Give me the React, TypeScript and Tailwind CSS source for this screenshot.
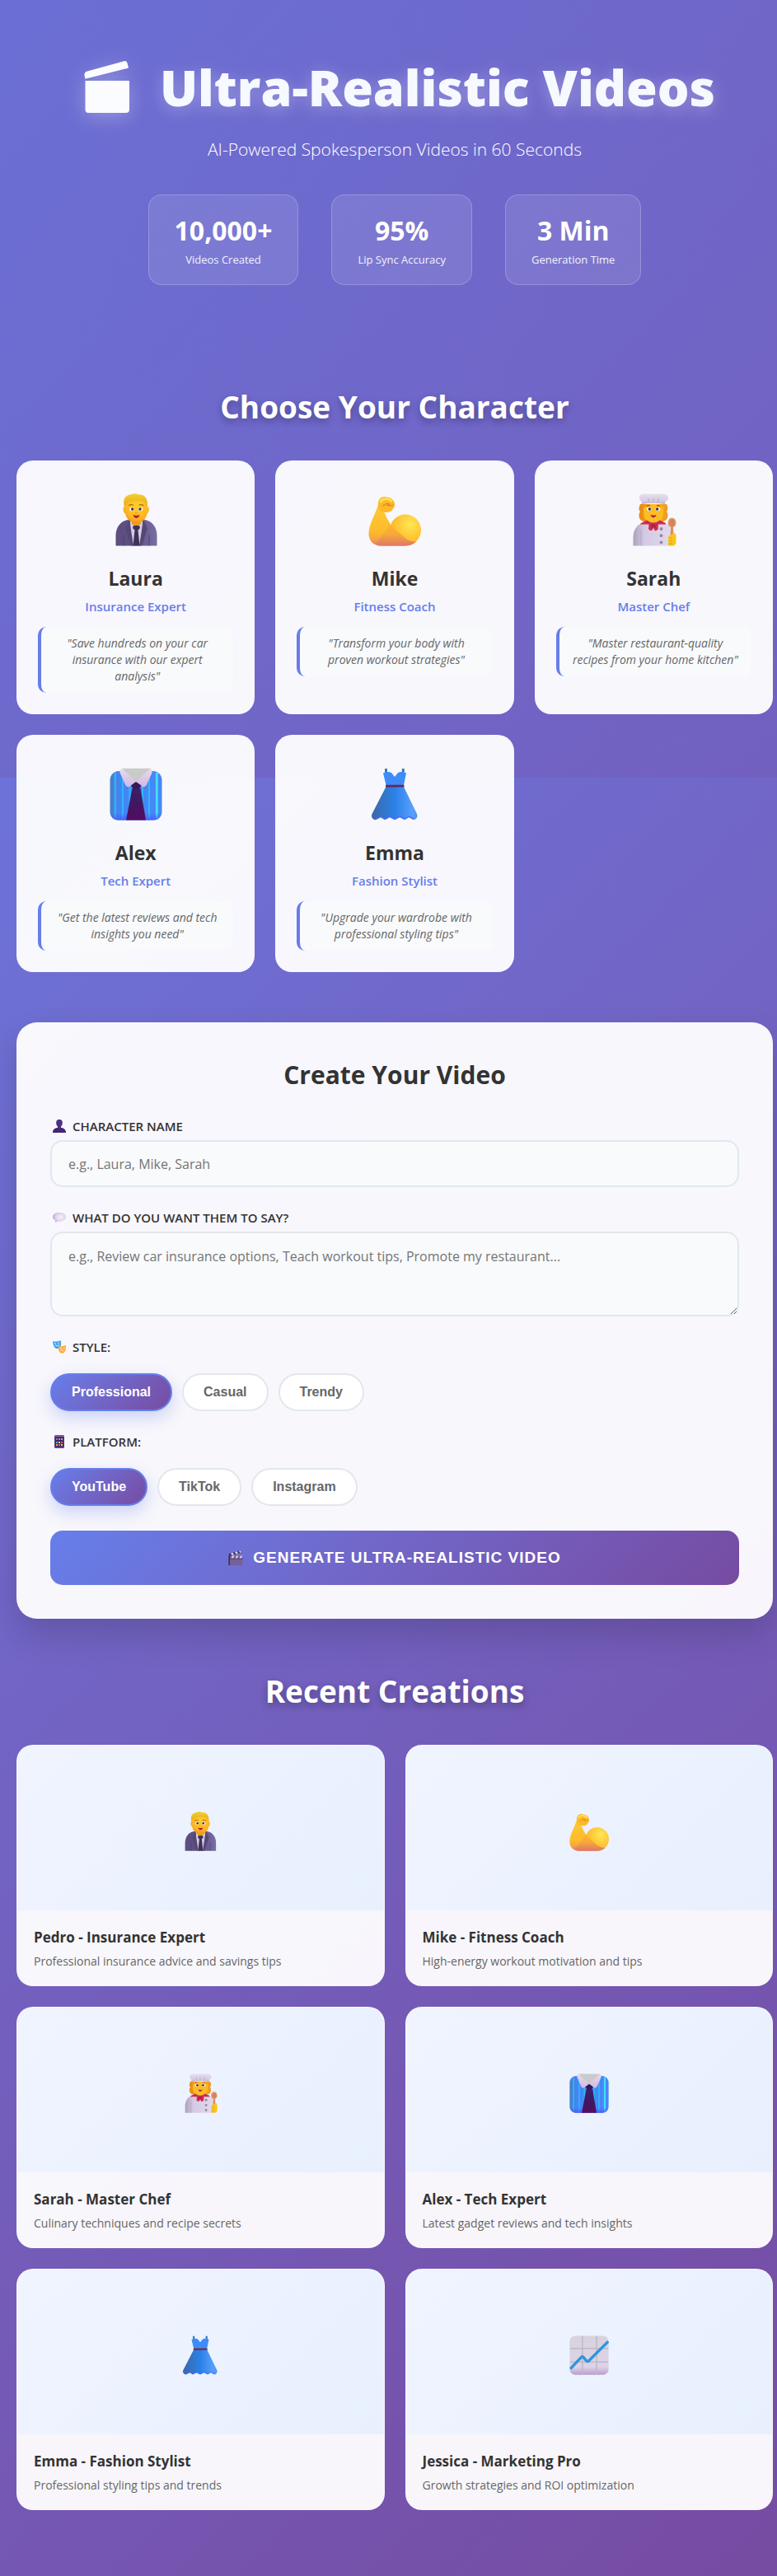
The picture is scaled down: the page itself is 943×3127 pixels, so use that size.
import React, { useId, useState } from "react";

type ArtProps = { className?: string };
type Art = (props: ArtProps) => React.ReactElement;

const BusinessPerson: Art = ({ className }) => {
  const id = useId();
  return (
    <svg viewBox="0 0 64 64" className={className} aria-hidden="true">
      <defs>
        <linearGradient id={`${id}s`} x1="0" x2="1">
          <stop offset="0" stopColor="#5d4f7e" />
          <stop offset="0.5" stopColor="#5c5084" />
          <stop offset="1" stopColor="#7a6ea6" />
        </linearGradient>
        <radialGradient id={`${id}f`} cx="0.55" cy="0.35" r="0.7">
          <stop offset="0" stopColor="#ffd02e" />
          <stop offset="0.7" stopColor="#fdb51f" />
          <stop offset="1" stopColor="#f28a1e" />
        </radialGradient>
        <linearGradient id={`${id}h`} x1="0" y1="0" x2="0" y2="1">
          <stop offset="0" stopColor="#f2d22c" />
          <stop offset="1" stopColor="#e9a61e" />
        </linearGradient>
      </defs>
      <path d="M7.5 63.500V51c0-11 7-19 17-19h16c10 0 17 8 17 19v12.500z" fill={`url(#${id}s)`} />
      <path d="M17 50v13.500M48 50v13.500" stroke="#4f4374" strokeWidth="1" />
      <path d="M25 34h15l-1 29.500H26z" fill="#d6cce2" />
      <path d="M24 32l5 31.500h-3L19 42zM41 32l-5 31.500h3L46 42z" fill="#544875" />
      <path d="M27 29h11v8l-5.500 4-5.500-4z" fill="#f09a20" />
      <path d="M29 39h7l1 3-2.500 2.500 2 19h-8l2-19L28 42z" fill="#3f3157" />
      <path d="M18 16c0-9 5-13 14-13s14 4 14 13c2.500 0 2.500 7-.5 8.500C44 32 39 36 32.500 36S21 32 19 24.500c-3-1.500-3-8.500-1-8.500z" fill={`url(#${id}f)`} />
      <path d="M18 16C15.500 8 19 2 25 1.500 29-.3 33-.2 35 1.500c6-1 12 4 10.500 12.500L45 16c-1-4-2-6-6-7-4 1-10-.5-14 1-4 .5-6 3-7 6z" fill={`url(#${id}h)`} />
      <path d="M23.500 14.500q2.500-1.500 5-.5M36 14q3-1 5 .5" stroke="#b5631a" strokeWidth="1.300" fill="none" strokeLinecap="round" />
      <ellipse cx="27" cy="19" rx="2.700" ry="2.300" fill="#fff" />
      <ellipse cx="37.500" cy="19" rx="2.700" ry="2.300" fill="#fff" />
      <circle cx="27.600" cy="19" r="1.700" fill="#3c2838" />
      <circle cx="37" cy="19" r="1.700" fill="#3c2838" />
      <path d="M31 23.500q1.500 1 3 0" stroke="#ef8b1f" strokeWidth="1" fill="none" />
      <path d="M28.500 26q4 1.500 8 0-1 4-4 4t-4-4z" fill="#bb1e46" />
    </svg>
  );
};

const FlexedArm: Art = ({ className }) => {
  const id = useId();
  return (
    <svg viewBox="0 0 64 64" className={className} aria-hidden="true">
      <defs>
        <linearGradient id={`${id}a`} x1="0" y1="0" x2="0" y2="1">
          <stop offset="0" stopColor="#fdcb34" />
          <stop offset="0.65" stopColor="#fdbb2c" />
          <stop offset="0.85" stopColor="#f5a242" />
          <stop offset="1" stopColor="#df7a68" />
        </linearGradient>
        <radialGradient id={`${id}b`} cx="0.65" cy="0.32" r="0.8">
          <stop offset="0" stopColor="#ffe754" />
          <stop offset="0.5" stopColor="#fec838" />
          <stop offset="1" stopColor="#fbab28" />
        </radialGradient>
        <linearGradient id={`${id}c`} x1="0" y1="0" x2="0" y2="1">
          <stop offset="0" stopColor="#fdb42c" />
          <stop offset="0.45" stopColor="#f9a838" />
          <stop offset="1" stopColor="#de7868" />
        </linearGradient>
      </defs>
      <path d="M11.500 15C9 24 1 37 .5 48 .2 57 6 63.500 15 63.500h30L27 38c-2-5-5-8-7-14z" fill={`url(#${id}a)`} />
      <circle cx="45" cy="44.500" r="19" fill={`url(#${id}b)`} />
      <path d="M26 38L15 53q-5 6-6 9 3 1.500 6 1.500h30q8 0 13-5-9 0-14-5z" fill={`url(#${id}c)`} />
      <path d="M12 12C12 6 17 3 22 4.500c6 0 10 4 10 9 0 3-1 4-2 5-1 3-4 4.500-9 4.500-6 0-10-4-9-11z" fill="#fcb92a" />
      <path d="M15 10c2-4 8-5 13-1" stroke="#ffdd4d" strokeWidth="3" fill="none" strokeLinecap="round" />
      <path d="M18 15q4-4 8-2l-3 1.500q4 1 7-.5" stroke="#db8a1d" strokeWidth="1.200" fill="none" strokeLinecap="round" />
    </svg>
  );
};

const Chef: Art = ({ className }) => {
  const id = useId();
  return (
    <svg viewBox="0 0 64 64" className={className} aria-hidden="true">
      <defs>
        <linearGradient id={`${id}c`} x1="0" x2="1">
          <stop offset="0" stopColor="#aba1ba" />
          <stop offset="0.3" stopColor="#d4cae4" />
          <stop offset="1" stopColor="#e2d8ee" />
        </linearGradient>
        <linearGradient id={`${id}t`} x1="0" y1="0" x2="0" y2="1">
          <stop offset="0" stopColor="#e6e0ec" />
          <stop offset="0.7" stopColor="#d5cbe3" />
          <stop offset="1" stopColor="#b9aad1" />
        </linearGradient>
        <linearGradient id={`${id}h`} x1="0" x2="1">
          <stop offset="0" stopColor="#e88716" />
          <stop offset="0.6" stopColor="#fbb022" />
          <stop offset="1" stopColor="#e99a22" />
        </linearGradient>
      </defs>
      <path d="M16 13c-2 5-2 7 0 9-3 4-1.500 11 4 12h24c5.500-1 7-8 4-12 2-2 2-5 0-9z" fill={`url(#${id}h)`} />
      <path d="M7.500 63.500V53C7.500 44 13 36 20 36h24c7 0 9 6 8.500 12v15.500z" fill={`url(#${id}c)`} />
      <path d="M17 44v19.500" stroke="#b5a8c8" strokeWidth="1" />
      <path d="M20 18q12-10 24 0v5c0 8-5 13-12 13s-12-5-12-13z" fill="#fcbc26" />
      <path d="M15 4.500C15 1.500 18 .5 22 .5h21c4 0 7 1.500 7 4.500 0 3-2 4.500-3.500 4.500L46 13q-14-2.500-28 0l-.5-3.500C16 9 15 7.500 15 4.500z" fill={`url(#${id}t)`} />
      <path d="M26 6v4M32 5.500v4M38 6v4" stroke="#a99bc0" strokeWidth="0.800" />
      <path d="M24 15.500q2-1.500 4-.5M36 15q2-1 4 .5" stroke="#a5551a" strokeWidth="1.100" fill="none" />
      <ellipse cx="26.700" cy="19" rx="2.700" ry="2.200" fill="#fff" />
      <ellipse cx="37.300" cy="19" rx="2.700" ry="2.200" fill="#fff" />
      <circle cx="27.300" cy="19" r="1.700" fill="#3c2838" />
      <circle cx="36.700" cy="19" r="1.700" fill="#3c2838" />
      <path d="M28.500 26q3.500 1 7 0-1 3.300-3.500 3.300T28.500 26z" fill="#b3203f" />
      <path d="M17 36l7-3.500q8 6 16 0l7 3.500v1.500H38L37.500 44 34 45.500 32 42l-2.500 3.500-3.500-2 .5-6H16z" fill="#cf2c4f" />
      <path d="M30 37.500h4l1 5-3-3-3 3z" fill="#a81f40" />
      <circle cx="41.500" cy="43" r="1.900" fill="#9388a3" />
      <circle cx="41.500" cy="51.200" r="1.900" fill="#9388a3" />
      <circle cx="41.500" cy="59.300" r="1.900" fill="#9388a3" />
      <path d="M53 38h3l.5 14h-4z" fill="#dc8d5e" />
      <ellipse cx="54.500" cy="35.500" rx="5" ry="6" fill="#e2976b" />
      <ellipse cx="54.700" cy="35.500" rx="3" ry="4.300" fill="#d0855a" />
      <path d="M50 52q5-2 6-4 3.500 0 3.500 4v7c0 3-2 4.500-4 4.500H50z" fill="#f8c61e" />
      <path d="M51 54h4M51 57.500h4M51 61h4" stroke="#db991a" strokeWidth="0.900" />
    </svg>
  );
};

const ShirtAndTie: Art = ({ className }) => {
  const id = useId();
  return (
    <svg viewBox="0 0 64 64" className={className} aria-hidden="true">
      <defs>
        <linearGradient id={`${id}s`} x1="0" x2="1">
          <stop offset="0" stopColor="#4781c4" />
          <stop offset="0.18" stopColor="#4385f5" />
          <stop offset="1" stopColor="#4887f6" />
        </linearGradient>
        <linearGradient id={`${id}v`} x1="0" y1="0" x2="0" y2="1">
          <stop offset="0" stopColor="#4a5bff" stopOpacity="0" />
          <stop offset="1" stopColor="#4a5bff" stopOpacity="0.9" />
        </linearGradient>
        <linearGradient id={`${id}t`} x1="0" y1="0" x2="0" y2="1">
          <stop offset="0" stopColor="#3c2064" />
          <stop offset="0.5" stopColor="#401762" />
          <stop offset="1" stopColor="#560c60" />
        </linearGradient>
        <linearGradient id={`${id}c`} x1="0" y1="0" x2="0" y2="1">
          <stop offset="0" stopColor="#e6dcec" />
          <stop offset="1" stopColor="#d3b8e4" />
        </linearGradient>
      </defs>
      <path d="M11 4h42c6 0 10.500 5 10.500 11v38c0 6-4 10.500-10 10.500h-43C4.500 63.500.5 59 .5 53V15C.5 9 5 4 11 4z" fill={`url(#${id}s)`} />
      <path d="M6.800 6v56.500M16 6v57.500M24.500 18v45.500M40 18v45.500M48 6v57.500" stroke="#2fb6fa" strokeWidth="2.200" />
      <path d="M57.300 6v56.500" stroke="#42e0fa" strokeWidth="2.800" />
      <path d="M1 55h62q-1.500 8.500-9.500 8.500h-43Q2 63.500 1 55z" fill={`url(#${id}v)`} />
      <path d="M15 .7h35L32.500 20z" fill="#cbcacb" />
      <path d="M27.500 25h10L44 63.500H20z" fill={`url(#${id}t)`} />
      <path d="M15 .7L32 17l-8 6q-3 .8-4.500-1.500L12.500 6q-.5-4 2.500-5.300zM49.500.7L32 17l7.500 6q3 .8 5-1.500L51.500 6q.5-4-2-5.300z" fill={`url(#${id}c)`} />
      <path d="M32 17l6.500 4.500-3 4.500h-6.500l-3-4.500z" fill="#38165a" />
    </svg>
  );
};

const Dress: Art = ({ className }) => {
  const id = useId();
  return (
    <svg viewBox="0 0 64 64" className={className} aria-hidden="true">
      <defs>
        <linearGradient id={`${id}d`} x1="0" x2="1">
          <stop offset="0" stopColor="#3b68a8" />
          <stop offset="0.3" stopColor="#3277cb" />
          <stop offset="0.5" stopColor="#2a80e8" />
          <stop offset="0.9" stopColor="#58a0fd" />
          <stop offset="1" stopColor="#4b92f6" />
        </linearGradient>
      </defs>
      <path d="M21.500 1v8M42.300 1v8" stroke="#307fc0" strokeWidth="3" />
      <path d="M18 6.500q6-2.500 10-.5l4 5 4-5q4-2 10 .5L43 21H21.500z" fill="#3d8cfa" />
      <path d="M21.500 23H43l16 33c1.500 4-1 7-4.500 7.300l-5.500-3-5 3-6-3-6 3-6-3-6 3-5-3-6 3C5 63 3 59.500 4.500 56z" fill={`url(#${id}d)`} />
      <path d="M9 62l6.500-3 5 3 6-3 6 3 6-3 6 3 5-3 6 3" stroke="#4b69f5" strokeWidth="1.200" fill="none" strokeLinejoin="round" />
      <rect x="21" y="20.700" width="22.500" height="2.900" rx="0.700" fill="#692655" />
    </svg>
  );
};

const RisingChart: Art = ({ className }) => {
  const id = useId();
  return (
    <svg viewBox="0 0 64 64" className={className} aria-hidden="true">
      <defs>
        <linearGradient id={`${id}p`} x1="0" y1="0" x2="0" y2="1">
          <stop offset="0" stopColor="#d8d3de" />
          <stop offset="0.8" stopColor="#ddd2e8" />
          <stop offset="1" stopColor="#b89fca" />
        </linearGradient>
      </defs>
      <rect x="0.500" y="0.500" width="63" height="63" rx="9" fill={`url(#${id}p)`} />
      <path d="M21 1v62M44 1v62M1 21h62M1 43h62" stroke="#bfb9c4" strokeWidth="2" />
      <path d="M1.500 54L19 35.500q2-2 4 0l4.500 5.500q2 2 4 0L63 9.500" stroke="#2e96dc" strokeWidth="4.500" fill="none" />
    </svg>
  );
};

const Silhouette: Art = ({ className }) => (
  <svg viewBox="0 0 16 16" className={className} aria-hidden="true">
    <path d="M8 0c3 0 4 2 3.800 4.500C11.600 7 10.500 8 10 8.500V10c3 .5 5.500 1.500 6 6H0c.5-4.500 3-5.500 6-6V8.500C5.500 8 4.400 7 4.200 4.500 4 2 5 0 8 0z" fill="#4f2f82" />
    <path d="M0 16c.5-4.500 3-5.500 6-6l2 1 2-1c3 .5 5.500 1.500 6 6z" fill="#452672" />
  </svg>
);

const SpeechBubble: Art = ({ className }) => {
  const id = useId();
  return (
    <svg viewBox="0 0 16 16" className={className} aria-hidden="true">
      <defs>
        <radialGradient id={id} cx="0.6" cy="0.45" r="0.6">
          <stop offset="0" stopColor="#f5eff8" />
          <stop offset="0.6" stopColor="#e2d5ed" />
          <stop offset="1" stopColor="#bca7d6" />
        </radialGradient>
      </defs>
      <path d="M8 2c4.500 0 8 2 8 5.300s-3.500 5.400-8 5.400q-1.500 0-2.500-.2L3 14.200l.3-2.500C1.200 10.800 0 9.300 0 7.300 0 4 3.500 2 8 2z" fill={`url(#${id})`} />
    </svg>
  );
};

const Masks: Art = ({ className }) => (
  <svg viewBox="0 0 16 16" className={className} aria-hidden="true">
    <path d="M0 1q5 1.500 9.500-1 1.500 6-.5 8.500-3 3-6 1Q.5 7 0 1z" fill="#41a3f7" />
    <path d="M2 3.500l2 .5M6 3.500l2-.5M3 6q2.500 1.500 5-.5" stroke="#d8f0ff" strokeWidth="1" fill="none" />
    <path d="M7 6.500q4 1.500 9-.5.500 7-2.500 9.300-3 1.500-5.500-1Q6.500 12 7 6.500z" fill="#fcae45" />
    <path d="M9 9.500l2 .5M13 9.500l1.500-.5M9.500 13q2-2.500 4 0" stroke="#fff0d0" strokeWidth="1" fill="none" />
  </svg>
);

const Phone: Art = ({ className }) => (
  <svg viewBox="0 0 16 16" className={className} aria-hidden="true">
    <rect x="2" y="0" width="12" height="16" rx="1.500" fill="#5c4385" />
    <rect x="2.500" y="0.500" width="11" height="1.500" rx="0.700" fill="#7a67ad" />
    <rect x="3" y="2.500" width="10" height="11.500" fill="#3d2766" />
    <path d="M4 4h2v2H4zM10 8h2v2h-2zM7 11h2v2H7z" fill="#f0566b" />
    <path d="M7 4h2v2H7zM4 8h2v2H4z" fill="#36b7f5" />
    <path d="M10 4h2v2h-2zM4 11h2v2H4z" fill="#f9a83a" />
    <path d="M7 8h2v2H7zM10 11h2v2h-2z" fill="#f7d145" />
  </svg>
);

const Clapperboard: Art = ({ className }) => (
  <svg viewBox="0 0 18 18" className={className} aria-hidden="true">
    <rect x="0.500" y="6" width="17" height="12" rx="1.200" fill="#75609b" />
    <path d="M.5 6H2v12H.5z" fill="#3a2a52" />
    <path d="M2 9.500h15.500v1H2z" fill="#4a3864" />
    <path d="M.5 4L15.500 0l1 2.800L1.500 7z" fill="#49375f" />
    <path d="M3 3.400l2.500-.7L7 5.200l-2.500.7zM8 2l2.500-.7 1.500 2.500-2.500.7zM13 .8l2-.5 1 2-1.500.7zM5 6.500h2.500L6 9.500H3.500zM10 6.500h2.500l-1.500 3H8.500zM15 6.500h2.500L16 9.500h-2.500z" fill="#d9cfe8" />
  </svg>
);

const TitleClapper: Art = ({ className }) => (
  <svg viewBox="0 0 56 64" className={className} aria-hidden="true">
    <path d="M1.500 24h53.500v35a4 4 0 0 1-4 4H5.500a4 4 0 0 1-4-4zM.5 17.500Q0 13.500 4 12.500L48.500.2q3-.7 4 2.300l1.500 6L1.500 21.800z" fill="#fbfcff" />
  </svg>
);

const stats = [
  { value: "10,000+", label: "Videos Created" },
  { value: "95%", label: "Lip Sync Accuracy" },
  { value: "3 Min", label: "Generation Time" },
];

const characters: { name: string; role: string; quote: string; art: Art }[] = [
  { name: "Laura", role: "Insurance Expert", quote: '"Save hundreds on your car insurance with our expert analysis"', art: BusinessPerson },
  { name: "Mike", role: "Fitness Coach", quote: '"Transform your body with proven workout strategies"', art: FlexedArm },
  { name: "Sarah", role: "Master Chef", quote: '"Master restaurant-quality recipes from your home kitchen"', art: Chef },
  { name: "Alex", role: "Tech Expert", quote: '"Get the latest reviews and tech insights you need"', art: ShirtAndTie },
  { name: "Emma", role: "Fashion Stylist", quote: '"Upgrade your wardrobe with professional styling tips"', art: Dress },
];

const creations: { title: string; text: string; art: Art }[] = [
  { title: "Pedro - Insurance Expert", text: "Professional insurance advice and savings tips", art: BusinessPerson },
  { title: "Mike - Fitness Coach", text: "High-energy workout motivation and tips", art: FlexedArm },
  { title: "Sarah - Master Chef", text: "Culinary techniques and recipe secrets", art: Chef },
  { title: "Alex - Tech Expert", text: "Latest gadget reviews and tech insights", art: ShirtAndTie },
  { title: "Emma - Fashion Stylist", text: "Professional styling tips and trends", art: Dress },
  { title: "Jessica - Marketing Pro", text: "Growth strategies and ROI optimization", art: RisingChart },
];

function SectionTitle({ children }: { children: React.ReactNode }) {
  return (
    <h2 className="text-center text-[37px] leading-[54px] font-bold text-white [text-shadow:0_4px_10px_rgba(0,0,0,0.3)]">
      {children}
    </h2>
  );
}

function Pills({ label, icon: Icon, options }: { label: string; icon: Art; options: string[] }) {
  const [active, setActive] = useState(options[0]);
  const id = useId();
  return (
    <div role="group" aria-labelledby={id}>
      <div id={id} className="flex h-5 items-center gap-2 pl-[3px] text-[15px] font-semibold text-[#333] uppercase">
        <Icon className="size-4" />
        {label}
      </div>
      <div className="mt-[22px] flex flex-wrap gap-3">
        {options.map((option) => (
          <button
            key={option}
            type="button"
            aria-pressed={option === active}
            onClick={() => setActive(option)}
            className={
              "h-[46px] rounded-[25px] border-2 px-6 font-['Liberation_Sans',sans-serif] text-[16px] font-bold " +
              (option === active
                ? "border-[#667eea] bg-linear-135 from-[#667eea] to-[#764ba2] text-white shadow-[0_8px_20px_rgba(102,126,234,0.3)]"
                : "border-[#e1e8ed] bg-white text-[#666]")
            }
          >
            {option}
          </button>
        ))}
      </div>
    </div>
  );
}

export default function App() {
  return (
    <div className="relative min-h-screen bg-linear-135 from-[#667eea] to-[#764ba2] font-['Open_Sans','Noto_Sans',sans-serif]">
      <div className="absolute inset-x-0 top-0 h-[944px] bg-linear-to-b from-[#764ba2]/30 to-[#764ba2]/24" />
      <div className="relative pr-[5px] pb-20 pl-5">
        <header className="flex flex-col items-center pt-[60px]">
          <h1 className="flex items-center gap-9 pl-3 text-[61px] leading-[92px] font-extrabold whitespace-nowrap">
            <TitleClapper className="h-16 w-14 drop-shadow-[0_4px_12px_rgba(255,255,255,0.3)]" />
            <span className="text-[#f6f9ff] [text-shadow:0_4px_20px_rgba(255,255,255,0.3)]">Ultra-Realistic Videos</span>
          </h1>
          <p className="mt-[14px] text-[21px] leading-[30px] font-light text-white">AI-Powered Spokesperson Videos in 60 Seconds</p>
          <div className="mt-10 flex flex-wrap justify-center gap-10">
            {stats.map((s) => (
              <div key={s.label} className="h-[110px] rounded-2xl border border-white/20 bg-white/10 px-[31px] pt-[21px] text-center text-white">
                <div className="text-[32px] leading-[44px] font-bold">{s.value}</div>
                <div className="mt-[3px] text-[13px] leading-5 text-white/90">{s.label}</div>
              </div>
            ))}
          </div>
        </header>

        <section className="mt-[121px]">
          <SectionTitle>Choose Your Character</SectionTitle>
          <div className="mt-[38px] grid grid-cols-3 gap-[25px]">
            {characters.map(({ name, role, quote, art: Icon }) => (
              <article key={name} className="rounded-[20px] bg-white/95 p-[26px] text-center">
                <Icon className="mx-auto mt-[14px] size-16" />
                <h3 className="mt-[23px] text-[23px] leading-8 font-bold text-[#333]">{name}</h3>
                <p className="mt-[7px] text-[15px] leading-[22px] font-semibold text-[#667eea]">{role}</p>
                <p className="mt-[14px] rounded-[10px] border-l-4 border-[#667eea] bg-[#f8fafc] px-[15px] py-[10px] text-[14px] leading-5 text-[#666] italic">
                  {quote}
                </p>
              </article>
            ))}
          </div>
        </section>

        <form
          onSubmit={(e) => e.preventDefault()}
          className="mt-[61px] rounded-[25px] bg-white/95 p-[41px] shadow-[0_20px_40px_rgba(0,0,0,0.15)]"
        >
          <h2 className="text-center text-[30px] leading-[46px] font-bold text-[#333]">Create Your Video</h2>
          <label htmlFor="name" className="mt-[29px] flex h-5 items-center gap-2 pl-[3px] text-[15px] font-semibold text-[#333] uppercase">
            <Silhouette className="size-4" />
            Character Name
          </label>
          <input
            id="name"
            placeholder="e.g., Laura, Mike, Sarah"
            className="mt-[7px] h-[57px] w-full rounded-[15px] border-2 border-[#e1e8ed] bg-[#f8fafc] px-5 text-[16px] text-[#333] placeholder:text-[#757575]"
          />
          <label htmlFor="message" className="mt-[27px] flex h-5 items-center gap-2 pl-[3px] text-[15px] font-semibold text-[#333] uppercase">
            <SpeechBubble className="size-4" />
            What do you want them to say?
          </label>
          <textarea
            id="message"
            placeholder="e.g., Review car insurance options, Teach workout tips, Promote my restaurant..."
            className="mt-[7px] block h-[103px] w-full resize-y rounded-[15px] border-2 border-[#e1e8ed] bg-[#f8fafc] px-5 py-4 text-[16px] leading-6 text-[#333] placeholder:text-[#757575]"
          />
          <div className="mt-[27px] flex flex-col gap-[27px]">
            <Pills label="Style:" icon={Masks} options={["Professional", "Casual", "Trendy"]} />
            <Pills label="Platform:" icon={Phone} options={["YouTube", "TikTok", "Instagram"]} />
          </div>
          <button
            type="submit"
            className="mt-[30px] flex h-[66px] w-full items-center justify-center gap-3 rounded-[15px] bg-linear-135 from-[#667eea] to-[#764ba2] font-['Liberation_Sans',sans-serif] text-[19px] font-bold tracking-[1px] text-white uppercase"
          >
            <Clapperboard className="size-[18px]" />
            Generate Ultra-Realistic Video
          </button>
        </form>

        <section className="mt-[61px]">
          <SectionTitle>Recent Creations</SectionTitle>
          <div className="mt-[38px] grid grid-cols-2 gap-[25px]">
            {creations.map(({ title, text, art: Icon }) => (
              <article key={title} className="overflow-hidden rounded-[20px] border border-white/20 bg-white/95">
                <div className="flex h-[200px] items-center justify-center bg-linear-135 from-[#f0f4ff] to-[#e8f0fe]">
                  <Icon className="mt-2 size-12" />
                </div>
                <div className="px-5 pt-5 pb-[19px]">
                  <h3 className="text-[17px] leading-[26px] font-bold text-[#333]">{title}</h3>
                  <p className="mt-[6px] text-[14px] leading-5 text-[#666]">{text}</p>
                </div>
              </article>
            ))}
          </div>
        </section>
      </div>
    </div>
  );
}
